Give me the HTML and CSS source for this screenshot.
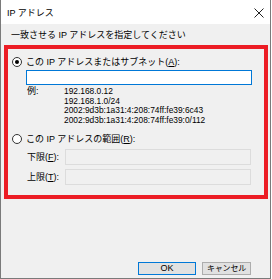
FILE: index.html
```html
<!DOCTYPE html>
<html lang="ja">
  <head>
    <meta charset="UTF-8" />
    <title>IP アドレス</title>
    <link rel="stylesheet" href="styles.css">
  </head>
  <body>
    <div class="window">
      <div class="titlebar">
        <span class="title">IP アドレス</span>
        <svg class="close" width="10" height="10" viewBox="0 0 10 10">
          <path d="M0.5 0.5 L9.5 9.5 M9.5 0.5 L0.5 9.5" stroke="#222" stroke-width="1" fill="none" />
        </svg>
      </div>
      <div class="body">
        <div class="prompt">一致させる IP アドレスを指定してください</div>
        <div class="frame">
          <div class="radio-row">
            <span class="radio checked"></span>
            <span>この IP アドレスまたはサブネット(<u>A</u>):</span>
          </div>
          <div class="textbox focused"></div>
          <div class="examples">
            <span class="ex-label">例:</span>
            <div class="ex-list">
              <div>192.168.0.12</div>
              <div>192.168.1.0/24</div>
              <div>2002:9d3b:1a31:4:208:74ff:fe39:6c43</div>
              <div>2002:9d3b:1a31:4:208:74ff:fe39:0/112</div>
            </div>
          </div>
          <div class="radio-row second">
            <span class="radio"></span>
            <span>この IP アドレスの範囲(<u>R</u>):</span>
          </div>
          <div class="range-row">
            <span class="range-label">下限(<u>F</u>):</span>
            <div class="textbox disabled"></div>
          </div>
          <div class="range-row">
            <span class="range-label">上限(<u>T</u>):</span>
            <div class="textbox disabled"></div>
          </div>
        </div>
        <div class="footer">
          <button class="btn btn-default" type="button">OK</button>
          <button class="btn btn-cancel" type="button">キャンセル</button>
        </div>
      </div>
    </div>
  </body>
</html>
```

FILE: styles.css
```css
body {
  margin: 0;
  background: #fff;
  font-family: "Liberation Sans", "Noto Sans CJK JP", sans-serif;
  font-size: 9px;
  color: #000;
}

.window {
  width: 271px;
  height: 279px;
  box-sizing: border-box;
  border: 1px solid #7a7a7a;
  border-top: none;
  display: flex;
  flex-direction: column;
}

.titlebar {
  height: 24px;
  flex: none;
  background: #fff;
  display: flex;
  align-items: center;
  justify-content: space-between;
  padding: 1px 6px 0 6px;
  box-sizing: border-box;
}
.title {
  line-height: 12px;
}

.body {
  flex: 1;
  background: #f0f0f0;
  padding-top: 5px;
  display: flex;
  flex-direction: column;
}

.prompt {
  line-height: 12px;
  padding-left: 10px;
}

.frame {
  margin: 4px 2px 0 3px;
  border: 4px solid #ec1c24;
  padding: 7px 0 10px 4px;
}

.radio-row {
  display: flex;
  align-items: center;
  gap: 4px;
  line-height: 12px;
}
.radio-row.second {
  margin-top: 7px;
}

.radio {
  width: 10px;
  height: 10px;
  box-sizing: border-box;
  border: 1px solid #333;
  border-radius: 50%;
  background: #fff;
  position: relative;
}
.radio.checked::after {
  content: "";
  position: absolute;
  left: 2px;
  top: 2px;
  width: 4px;
  height: 4px;
  border-radius: 50%;
  background: #000;
}

.textbox {
  box-sizing: border-box;
  border: 1px solid #7a7a7a;
  background: #fff;
}
.textbox.focused {
  margin: 2px 0 0 14px;
  width: 226px;
  height: 15px;
  border-color: #0078d7;
}
.textbox.disabled {
  width: 186px;
  height: 16px;
  border-color: #dcdcdc;
  background: #f0f0f0;
}

.examples {
  display: flex;
  margin: 2px 0 0 15px;
  line-height: 9.7px;
  font-size: 8.4px;
}
.ex-label {
  width: 37px;
  font-size: 9px;
}

.range-row {
  display: flex;
  align-items: center;
  margin: 4px 0 0 15px;
}
.range-label {
  width: 38px;
}

.footer {
  margin-top: auto;
  display: flex;
  justify-content: flex-end;
  gap: 6px;
  padding: 0 19px 3px 0;
}

.btn {
  font-family: inherit;
  font-size: 9px;
  height: 13px;
  width: 58px;
  padding: 0;
  line-height: 11px;
  border: 1px solid #adadad;
  background: #e1e1e1;
  color: #000;
}
.btn-cancel {
  width: 49px;
  font-size: 8px;
  letter-spacing: -0.2px;
}
.btn-default {
  border-color: #0078d7;
}
```
